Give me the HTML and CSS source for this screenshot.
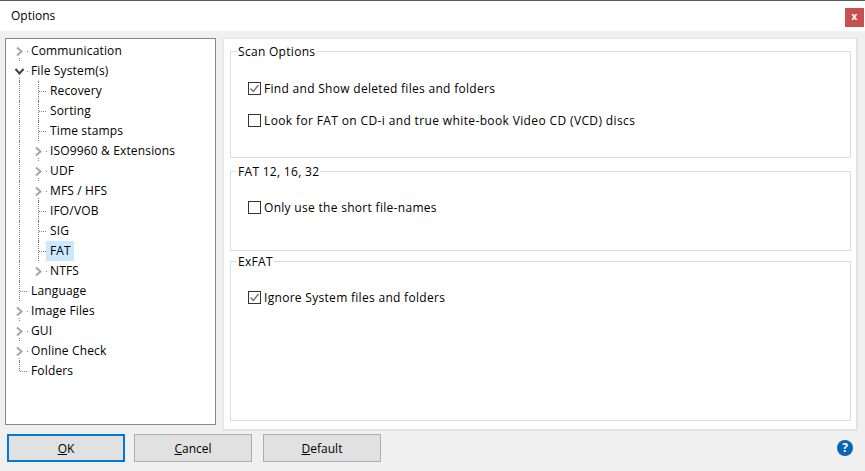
FILE: index.html
```html
<!DOCTYPE html>
<html lang="en">
<head>
<meta charset="utf-8">
<title>Options</title>
<link rel="stylesheet" href="styles.css">
</head>
<body>
<div class="window">
  <header class="titlebar">
    <span class="title">Options</span>
    <span class="close">x</span>
  </header>
  <main class="content">
    <nav class="tree">
      <div class="row"><span class="cell tw more"><svg class="chev" width="9" height="11" viewBox="0 0 9 11"><path d="M2 1.5 6.5 5.5 2 9.5"/></svg></span><span class="label">Communication</span></div>
      <div class="row"><span class="cell tw more"><svg class="chev open" width="11" height="9" viewBox="0 0 11 9"><path d="M1.5 2 5.5 6.5 9.5 2"/></svg></span><span class="label">File System(s)</span></div>
      <div class="row"><span class="cell v"></span><span class="cell t"></span><span class="label">Recovery</span></div>
      <div class="row"><span class="cell v"></span><span class="cell t"></span><span class="label">Sorting</span></div>
      <div class="row"><span class="cell v"></span><span class="cell t"></span><span class="label">Time stamps</span></div>
      <div class="row"><span class="cell v"></span><span class="cell tw more"><svg class="chev" width="9" height="11" viewBox="0 0 9 11"><path d="M2 1.5 6.5 5.5 2 9.5"/></svg></span><span class="label">ISO9960 &amp; Extensions</span></div>
      <div class="row"><span class="cell v"></span><span class="cell tw more"><svg class="chev" width="9" height="11" viewBox="0 0 9 11"><path d="M2 1.5 6.5 5.5 2 9.5"/></svg></span><span class="label">UDF</span></div>
      <div class="row"><span class="cell v"></span><span class="cell tw more"><svg class="chev" width="9" height="11" viewBox="0 0 9 11"><path d="M2 1.5 6.5 5.5 2 9.5"/></svg></span><span class="label">MFS / HFS</span></div>
      <div class="row"><span class="cell v"></span><span class="cell t"></span><span class="label">IFO/VOB</span></div>
      <div class="row"><span class="cell v"></span><span class="cell t"></span><span class="label">SIG</span></div>
      <div class="row"><span class="cell v"></span><span class="cell t"></span><span class="label selected">FAT</span></div>
      <div class="row"><span class="cell v"></span><span class="cell tw"><svg class="chev" width="9" height="11" viewBox="0 0 9 11"><path d="M2 1.5 6.5 5.5 2 9.5"/></svg></span><span class="label">NTFS</span></div>
      <div class="row"><span class="cell t"></span><span class="label">Language</span></div>
      <div class="row"><span class="cell tw more"><svg class="chev" width="9" height="11" viewBox="0 0 9 11"><path d="M2 1.5 6.5 5.5 2 9.5"/></svg></span><span class="label">Image Files</span></div>
      <div class="row"><span class="cell tw more"><svg class="chev" width="9" height="11" viewBox="0 0 9 11"><path d="M2 1.5 6.5 5.5 2 9.5"/></svg></span><span class="label">GUI</span></div>
      <div class="row"><span class="cell tw more"><svg class="chev" width="9" height="11" viewBox="0 0 9 11"><path d="M2 1.5 6.5 5.5 2 9.5"/></svg></span><span class="label">Online Check</span></div>
      <div class="row"><span class="cell e"></span><span class="label">Folders</span></div>
    </nav>
    <section class="panel">
      <fieldset class="group scan">
        <legend>Scan Options</legend>
        <div class="option"><span class="box"><svg width="11" height="11" viewBox="0 0 11 11"><path d="M1.5 5.5 4.3 8.5 9.5 2"/></svg></span>Find and Show deleted files and folders</div>
        <div class="option second"><span class="box"></span>Look for FAT on CD-i and true white-book Video CD (VCD) discs</div>
      </fieldset>
      <fieldset class="group fat">
        <legend>FAT 12, 16, 32</legend>
        <div class="option"><span class="box"></span>Only use the short file-names</div>
      </fieldset>
      <fieldset class="group exfat">
        <legend>ExFAT</legend>
        <div class="option"><span class="box"><svg width="11" height="11" viewBox="0 0 11 11"><path d="M1.5 5.5 4.3 8.5 9.5 2"/></svg></span>Ignore System files and folders</div>
      </fieldset>
    </section>
  </main>
  <footer class="actions">
    <button class="btn primary"><u>O</u>K</button>
    <button class="btn cancel"><u>C</u>ancel</button>
    <button class="btn default"><u>D</u>efault</button>
    <span class="help">?</span>
  </footer>
</div>
</body>
</html>
```
FILE: styles.css
```css
* { box-sizing: border-box; }
html, body { margin: 0; padding: 0; }
body {
  width: 865px;
  height: 471px;
  overflow: hidden;
  background: #f0f0f0;
  color: #000;
  font-family: "Open Sans", "Noto Sans", sans-serif;
  font-size: 12px;
}
.window { display: flex; flex-direction: column; height: 471px; }

.titlebar {
  height: 31px;
  flex: none;
  background: #fff;
  border-top: 1px solid #5a5a5a;
  display: flex;
  align-items: flex-start;
  justify-content: space-between;
  padding: 7px 1px 0 11px;
}
.title { line-height: 16px; }
.close {
  width: 19px;
  height: 19px;
  background: #c75050;
  color: #fff;
  font-weight: 700;
  font-size: 10px;
  line-height: 17px;
  text-align: center;
}

.content {
  flex: none;
  height: 394px;
  display: flex;
  align-items: flex-start;
  padding: 7px 7px 0 5px;
  gap: 7px;
}

.tree {
  width: 211px;
  height: 387px;
  flex: none;
  background: #fff;
  border: 1px solid #828790;
  padding: 2px 0 0 4px;
}
.row { display: flex; height: 20px; align-items: stretch; line-height: 20px; white-space: nowrap; }
.cell { width: 19px; flex: none; position: relative; display: flex; align-items: center; justify-content: center; }
.cell.v::before, .cell.t::before, .cell.e::before, .cell.more::after {
  content: "";
  position: absolute;
  left: 9px;
  width: 0;
  border-left: 1px dotted #7f7f7f;
}
.cell.v::before, .cell.t::before { top: 0; bottom: 0; }
.cell.e::before { top: 0; height: 10px; }
.cell.more::after { bottom: 0; height: 3px; }
.cell.t::after, .cell.e::after, .cell.tw::before {
  content: "";
  position: absolute;
  top: 10px;
  height: 0;
  border-top: 1px dotted #7f7f7f;
}
.cell.t::after, .cell.e::after { left: 10px; width: 7px; }
.cell.tw::before { left: 17px; width: 1px; }
.chev { display: block; fill: none; stroke: #a6a6a6; stroke-width: 2; }
.chev.open { stroke: #404040; }
.label { margin-left: -2px; padding: 0 3px 0 4px; height: 20px; letter-spacing: .15px; }
.label.selected { background: #cce8ff; }

.panel {
  width: 635px;
  height: 393px;
  flex: none;
  background: #fff;
  border: 1px solid #e3e3e3;
  border-width: 1px 2px 2px 1px;
  padding: 5px 5px 0 6px;
  display: flex;
  flex-direction: column;
  letter-spacing: .3px;
}
.group {
  margin: 0;
  padding: 0 0 0 17px;
  min-width: 0;
  border: 1px solid #dcdcdc;
  flex: none;
}
.group legend { margin-left: -11px; padding: 0 1px; line-height: 16px; height: 14px; }
.scan { height: 114px; }
.fat { height: 87px; margin-top: 6px; }
.exfat { height: 167px; margin-top: 3px; }
.option { display: flex; align-items: center; gap: 3px; height: 16px; margin-top: 21px; }
.scan .option { margin-top: 22px; }
.scan .option.second { margin-top: 16px; letter-spacing: .37px; }
.box {
  width: 13px;
  height: 13px;
  flex: none;
  background: #fff;
  border: 1px solid #333;
  display: flex;
  align-items: center;
  justify-content: center;
}
.box svg { display: block; fill: none; stroke: #707070; stroke-width: 1.3; }

.actions { flex: 1; position: relative; display: flex; align-items: flex-start; padding: 9px 0 0 7px; }
.btn {
  width: 118px;
  height: 28px;
  padding: 0;
  background: #e1e1e1;
  border: 1px solid #adadad;
  border-radius: 0;
  color: #000;
  font: inherit;
}
.primary { border: 2px solid #0078d7; }
.cancel { margin-left: 9px; }
.default { margin-left: 11px; }
.help {
  position: absolute;
  left: 837px;
  top: 15px;
  width: 16px;
  height: 16px;
  border-radius: 50%;
  background: #0a64b4;
  color: #fff;
  font-weight: 700;
  font-size: 12px;
  line-height: 16px;
  text-align: center;
}
```
